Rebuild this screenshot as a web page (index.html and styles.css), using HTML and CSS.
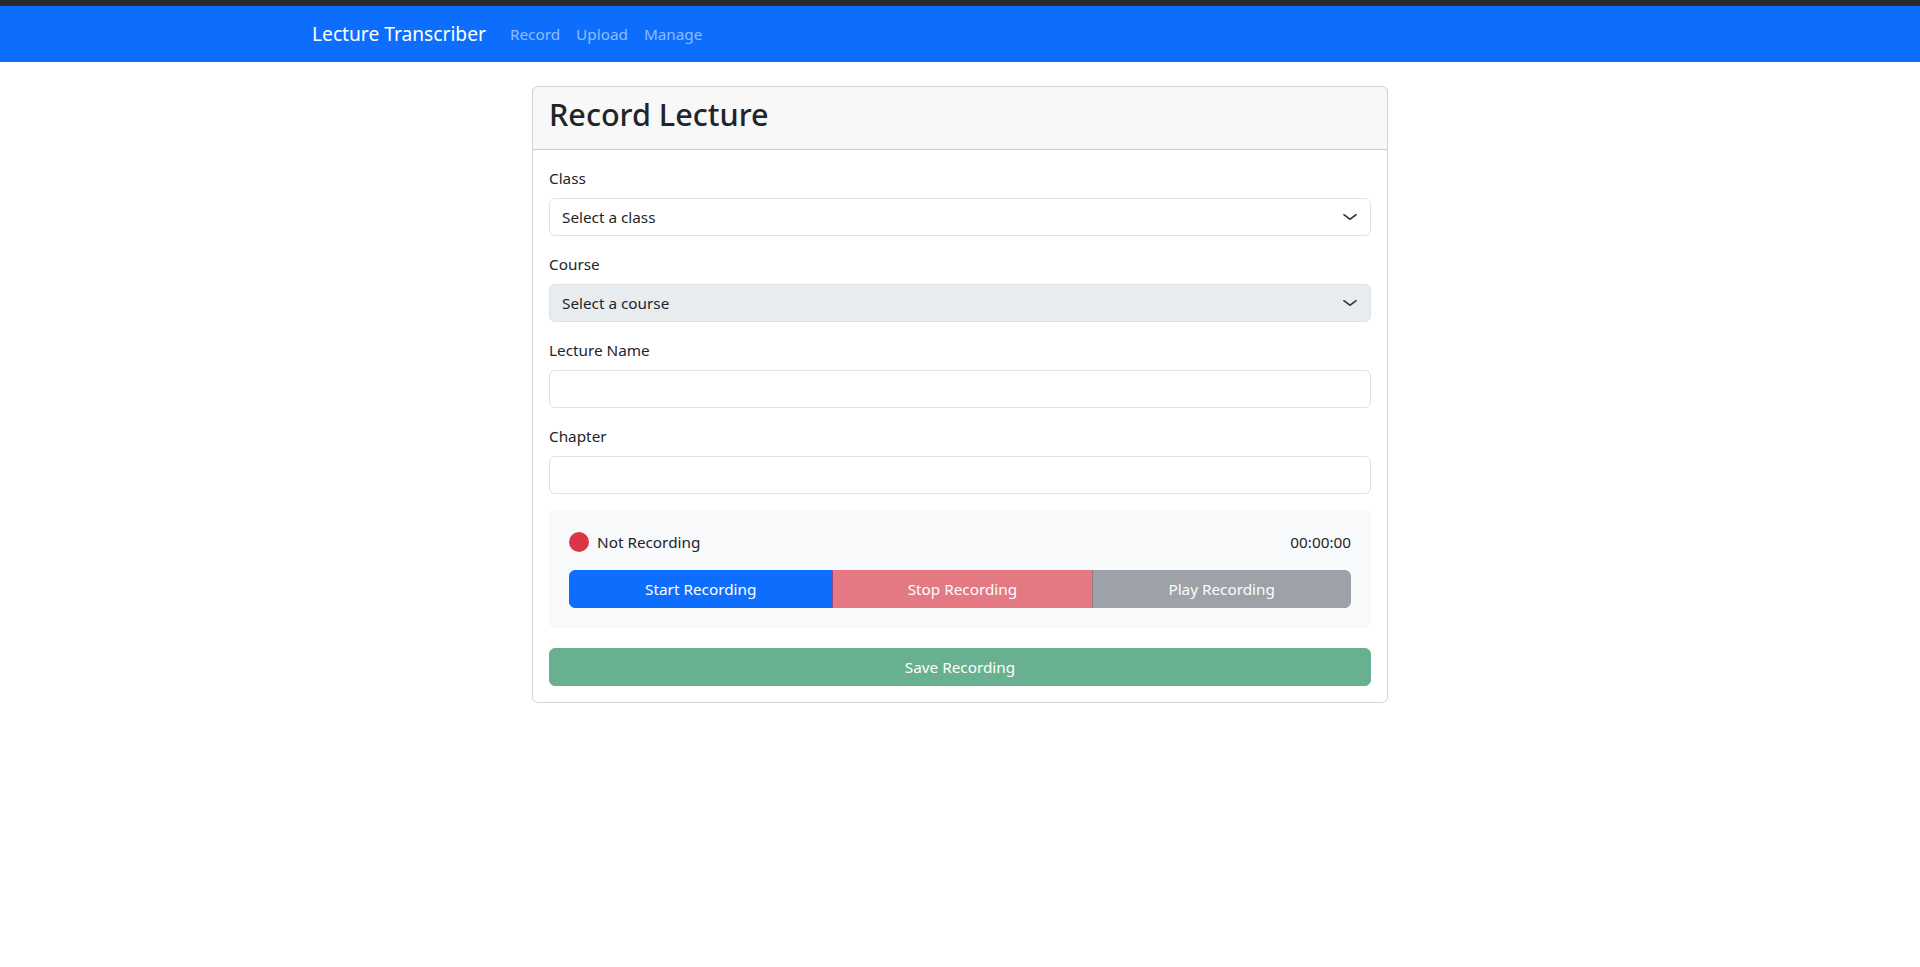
FILE: index.html
```html
<!DOCTYPE html>
<html lang="en">
<head>
<meta charset="utf-8">
<title>Record Lecture - Lecture Transcriber</title>
<link rel="stylesheet" href="styles.css">
</head>
<body>
<div class="topstrip"></div>
<nav class="navbar">
  <div class="container nav-inner">
    <a class="brand" href="#">Lecture Transcriber</a>
    <ul class="nav-links">
      <li><a href="#">Record</a></li>
      <li><a href="#">Upload</a></li>
      <li><a href="#">Manage</a></li>
    </ul>
  </div>
</nav>
<main class="container main">
  <div class="col">
    <section class="card">
      <header class="card-header">
        <h2>Record Lecture</h2>
      </header>
      <div class="card-body">
        <div class="field">
          <label for="cls">Class</label>
          <div class="select-wrap">
            <select id="cls" class="form-select"><option>Select a class</option></select>
            <svg class="chev" viewBox="0 0 16 16" width="16" height="12" preserveAspectRatio="none"><path fill="none" stroke="#343a40" stroke-linecap="round" stroke-linejoin="round" stroke-width="2" d="m2 5 6 6 6-6"/></svg>
          </div>
        </div>
        <div class="field">
          <label for="crs">Course</label>
          <div class="select-wrap">
            <select id="crs" class="form-select" disabled><option>Select a course</option></select>
            <svg class="chev" viewBox="0 0 16 16" width="16" height="12" preserveAspectRatio="none"><path fill="none" stroke="#343a40" stroke-linecap="round" stroke-linejoin="round" stroke-width="2" d="m2 5 6 6 6-6"/></svg>
          </div>
        </div>
        <div class="field">
          <label for="lname">Lecture Name</label>
          <input id="lname" class="form-control" type="text">
        </div>
        <div class="field">
          <label for="chap">Chapter</label>
          <input id="chap" class="form-control" type="text">
        </div>
        <div class="recorder">
          <div class="rec-status">
            <div class="status-left">
              <span class="dot"></span>
              <span>Not Recording</span>
            </div>
            <span class="timer">00:00:00</span>
          </div>
          <div class="btn-group">
            <button class="btn btn-primary">Start Recording</button>
            <button class="btn btn-danger" disabled>Stop Recording</button>
            <button class="btn btn-secondary" disabled>Play Recording</button>
          </div>
        </div>
        <button class="btn btn-success btn-block" disabled>Save Recording</button>
      </div>
    </section>
  </div>
</main>
</body>
</html>
```
FILE: styles.css
```css
* { box-sizing: border-box; }
html, body { margin: 0; padding: 0; }
body {
  font-family: "Noto Sans", "Open Sans", sans-serif;
  font-size: 15.3px;
  line-height: 24px;
  color: #212529;
  background: #fff;
}
.topstrip { height: 6px; background: #2b2b2b; }
.container {
  width: 1320px;
  margin: 0 auto;
  padding: 0 12px;
}
.navbar {
  background: #0d6efd;
  padding: 8px 0;
}
.nav-inner { display: flex; align-items: center; }
.brand {
  color: #fff;
  text-decoration: none;
  font-size: 19.2px;
  line-height: 30px;
  padding: 5px 0;
  margin-right: 16px;
}
.nav-links {
  list-style: none;
  display: flex;
  margin: 0;
  padding: 0;
}
.nav-links a {
  display: block;
  padding: 8px;
  color: rgba(255,255,255,0.55);
  text-decoration: none;
}
.main { padding-top: 24px; display: flex; justify-content: center; }
.col { width: 880px; padding: 0 12px; }
.card {
  border: 1px solid rgba(0,0,0,0.175);
  border-radius: 6px;
  overflow: hidden;
}
.card-header {
  background: rgba(33,37,41,0.03);
  border-bottom: 1px solid rgba(0,0,0,0.175);
  padding: 8px 16px;
}
.card-header h2 {
  margin: 0 0 8px;
  font-size: 30.6px;
  font-weight: 500;
  line-height: 38.4px;
}
.card-body { padding: 16px; }
.field { margin-bottom: 16px; }
.field label { display: block; margin-bottom: 8px; }
.select-wrap { position: relative; }
.form-select, .form-control {
  display: block;
  width: 100%;
  height: 38px;
  padding: 6px 12px;
  font: inherit;
  color: #212529;
  background: #fff;
  border: 1px solid #dee2e6;
  border-radius: 6px;
  -webkit-appearance: none;
  appearance: none;
  outline: none;
}
.form-select { padding-right: 36px; }
.form-select:disabled { background: #e9ecef; color: #212529; opacity: 1; }
.chev {
  position: absolute;
  right: 13px;
  top: 13px;
  pointer-events: none;
}
.recorder {
  background: #f8f9fa;
  border-radius: 6px;
  padding: 20px;
  margin-bottom: 20px;
}
.rec-status {
  display: flex;
  justify-content: space-between;
  align-items: center;
  margin-bottom: 16px;
}
.status-left { display: flex; align-items: center; gap: 8px; }
.dot {
  width: 20px;
  height: 20px;
  border-radius: 50%;
  background: #dc3545;
}
.btn-group { display: flex; }
.btn {
  font: inherit;
  height: 38px;
  padding: 6px 12px;
  border: 1px solid transparent;
  border-radius: 6px;
  color: #fff;
  cursor: pointer;
}
.btn:disabled { opacity: 0.65; cursor: default; }
.btn-group .btn { flex: 1 1 auto; border-radius: 0; }
.btn-group .btn:first-child { border-radius: 6px 0 0 6px; }
.btn-group .btn:last-child { border-radius: 0 6px 6px 0; }
.btn-group .btn + .btn { margin-left: -1px; }
.btn-primary { background: #0d6efd; border-color: #0d6efd; }
.btn-danger { background: #dc3545; border-color: #dc3545; }
.btn-secondary { background: #6c757d; border-color: #6c757d; }
.btn-success { background: #198754; border-color: #198754; }
.btn-block { display: block; width: 100%; }
```
